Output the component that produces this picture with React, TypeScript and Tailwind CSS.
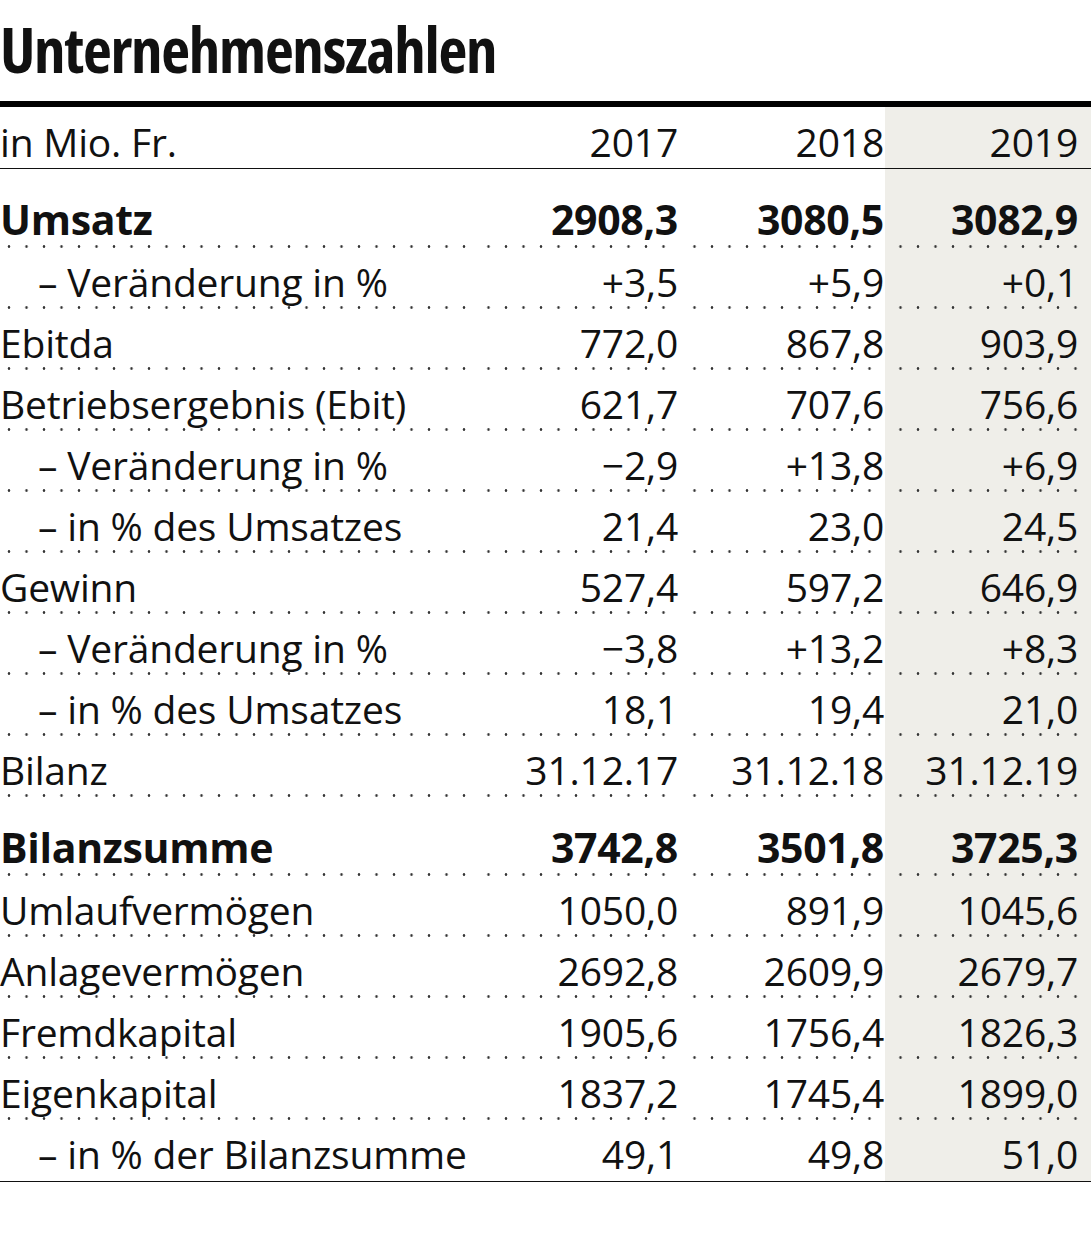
import React from "react";

type Row = {
  label: string;
  values: [string, string, string];
  sub?: boolean;
  bold?: boolean;
  tall?: boolean;
  last?: boolean;
};

const rows: Row[] = [
  { label: "Umsatz", values: ["2908,3", "3080,5", "3082,9"], bold: true, tall: true },
  { label: "– Veränderung in %", values: ["+3,5", "+5,9", "+0,1"], sub: true },
  { label: "Ebitda", values: ["772,0", "867,8", "903,9"] },
  { label: "Betriebsergebnis (Ebit)", values: ["621,7", "707,6", "756,6"] },
  { label: "– Veränderung in %", values: ["−2,9", "+13,8", "+6,9"], sub: true },
  { label: "– in % des Umsatzes", values: ["21,4", "23,0", "24,5"], sub: true },
  { label: "Gewinn", values: ["527,4", "597,2", "646,9"] },
  { label: "– Veränderung in %", values: ["−3,8", "+13,2", "+8,3"], sub: true },
  { label: "– in % des Umsatzes", values: ["18,1", "19,4", "21,0"], sub: true },
  { label: "Bilanz", values: ["31.12.17", "31.12.18", "31.12.19"] },
  { label: "Bilanzsumme", values: ["3742,8", "3501,8", "3725,3"], bold: true, tall: true },
  { label: "Umlaufvermögen", values: ["1050,0", "891,9", "1045,6"] },
  { label: "Anlagevermögen", values: ["2692,8", "2609,9", "2679,7"] },
  { label: "Fremdkapital", values: ["1905,6", "1756,4", "1826,3"] },
  { label: "Eigenkapital", values: ["1837,2", "1745,4", "1899,0"] },
  { label: "– in % der Bilanzsumme", values: ["49,1", "49,8", "51,0"], sub: true, last: true },
];

const dots =
  "bg-[image:radial-gradient(circle,#333_1px,transparent_1.6px)] bg-[length:17.5px_3px] bg-bottom bg-repeat-x";

export default function App() {
  return (
    <div
      className="w-[1091px] bg-white text-[#111]"
      style={{ fontFamily: "'Open Sans', 'Noto Sans', sans-serif" }}
    >
      <div className="h-[101px] pt-[17px] text-[63px] leading-[63px] font-bold tracking-[-1.3px] [font-stretch:75%]">
        Unternehmenszahlen
      </div>
      <div className="h-[6px] bg-black" />

      <div className="grid grid-cols-[473px_206px_206px_206px] border-b-[1.5px] border-[#111] text-[39px] leading-[55px] tracking-[-0.2px]">
        <div className="h-[61px] pt-[7px]">in Mio. Fr.</div>
        <div className="h-[61px] pt-[7px] text-right pr-[1px]">2017</div>
        <div className="h-[61px] pt-[7px] text-right pr-[1px]">2018</div>
        <div className="h-[61px] pt-[7px] text-right pr-[13px] bg-[#efeee9]">2019</div>
      </div>

      <div className="border-b-[1.5px] border-[#111]">
        {rows.map((r, i) => {
          const h = r.tall
            ? r.bold
              ? "h-[79px] pt-[22px]"
              : "h-[79px] pt-[23px]"
            : r.bold
              ? "h-[61px] pt-[4px]"
              : "h-[61px] pt-[5px]";
          const line = r.last ? "" : dots;
          return (
            <div
              key={i}
              className={
                "grid grid-cols-[473px_206px_206px_206px] leading-[57px] " +
                (r.bold ? "font-bold text-[41px] tracking-[-0.3px]" : "text-[39px] tracking-[-0.2px]")
              }
            >
              <div className={`${h} ${line} ${r.sub ? "pl-[38px]" : ""} whitespace-nowrap`}>
                {r.label}
              </div>
              <div className={`${h} ${line} text-right pr-[1px]`}>{r.values[0]}</div>
              <div className={`${h} ${line} text-right pr-[1px]`}>{r.values[1]}</div>
              <div className={`${h} ${line} text-right pr-[13px] bg-[#efeee9]`}>{r.values[2]}</div>
            </div>
          );
        })}
      </div>
    </div>
  );
}
